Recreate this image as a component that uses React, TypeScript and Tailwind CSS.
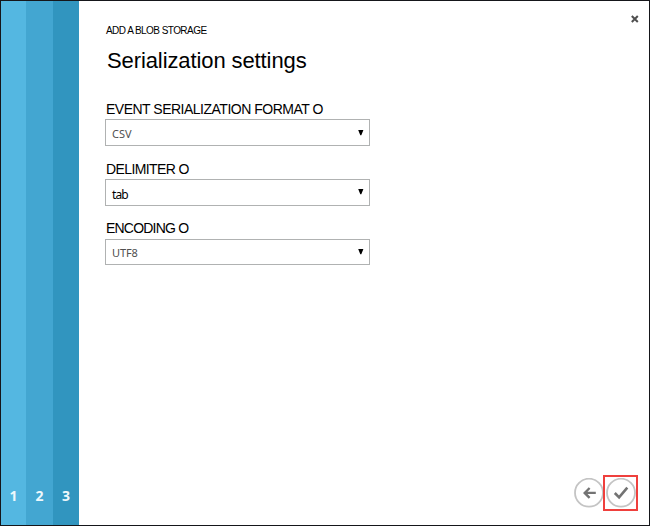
const arial = "font-['Liberation_Sans',Arial,sans-serif]";
const sans = "font-['Noto_Sans','Open_Sans',sans-serif]";

type FieldProps = {
  label: string;
  value: string;
  labelClass: string;
  valueClass: string;
  boxClass: string;
  arrowClass: string;
};

function Field({ label, value, labelClass, valueClass, boxClass, arrowClass }: FieldProps) {
  return (
    <div className="flex flex-col">
      <div className={`ml-px whitespace-nowrap text-[14px] leading-[18px] text-black ${arial} ${labelClass}`}>{label}</div>
      <div className={`flex w-[265px] justify-between border border-[#b0b2b2] bg-white pr-[5px] pl-[6px] ${boxClass}`}>
        <span className={`whitespace-nowrap ${sans} ${valueClass}`}>{value}</span>
        <svg className={`h-[6px] w-[6px] ${arrowClass}`} viewBox="0 0 6 6">
          <path d="M0.2 0H5.4L3.3 5.3H2.3Z" fill="#000" />
        </svg>
      </div>
    </div>
  );
}

function Step({ n, color }: { n: number; color: string }) {
  return (
    <div className={`flex items-end justify-center pb-[18px] text-[14px] leading-[22px] font-bold text-[#eef8fc] ${sans} ${color}`}>{n}</div>
  );
}

export default function App() {
  return (
    <div className="flex h-[526px] w-[650px] overflow-hidden border border-[#15161a] bg-white">
      <aside className="grid w-[78px] shrink-0 grid-cols-[25px_27px_26px]">
        <Step n={1} color="bg-[#54b7e1]" />
        <Step n={2} color="bg-[#43a6d1]" />
        <Step n={3} color="bg-[#3195bf]" />
      </aside>
      <main className="flex grow flex-col pr-[10px] pl-[26px]">
        <header className="flex h-[92px] justify-between">
          <div className="pt-[23px] pl-px">
            <div className={`h-[14px] whitespace-nowrap text-[10px] leading-[14px] tracking-[-0.55px] text-black ${arial}`}>ADD A BLOB STORAGE</div>
            <h1 className={`mt-[9px] ml-px whitespace-nowrap text-[22px] leading-[28px] tracking-[-0.1px] text-black ${arial}`}>Serialization settings</h1>
          </div>
          <button aria-label="Close" className="mt-[14px] h-[8px] w-[8px]">
            <svg className="block h-[8px] w-[8px]" viewBox="0 0 8 8">
              <path d="M0.8 1L6.8 7M6.8 1L0.8 7" stroke="#505050" strokeWidth="2" />
            </svg>
          </button>
        </header>
        <section className="flex grow flex-col pt-[7px]">
          <Field
            label="EVENT SERIALIZATION FORMAT O"
            value="CSV"
            labelClass="h-[19px] tracking-[-0.5px]"
            boxClass="h-[27px]"
            arrowClass="mt-[10px]"
            valueClass="text-[11px] leading-[27px] text-[#505050]"
          />
          <div className="h-[14px]" />
          <Field
            label="DELIMITER O"
            value="tab"
            labelClass="h-[19px] tracking-[-0.6px]"
            boxClass="h-[27px]"
            arrowClass="mt-[9px]"
            valueClass="text-[12px] leading-[29px] tracking-[-0.9px] text-black"
          />
          <div className="h-[13px]" />
          <Field
            label="ENCODING O"
            value="UTF8"
            labelClass="h-[20px] tracking-[-0.8px]"
            boxClass="h-[26px]"
            arrowClass="mt-[9px]"
            valueClass="text-[11px] leading-[25px] tracking-[-0.1px] text-[#505050]"
          />
        </section>
        <footer className="mr-[1px] mb-[14px] flex items-center justify-end">
          <button aria-label="Back" className="-mr-px h-[30px] w-[30px]">
            <svg className="block h-[30px] w-[30px]" viewBox="0 0 30 30" fill="none">
              <circle cx="15" cy="14.7" r="14" stroke="#c4c4c4" strokeWidth="1.8" />
              <path d="M10.8 14.9H21.8M15.6 10L10.7 14.9L15.6 19.8" stroke="#737373" strokeWidth="2.4" />
            </svg>
          </button>
          <button aria-label="Complete" className="flex h-[36px] w-[35px] items-center justify-center border-2 border-[#ef403d]">
            <svg className="block h-[30px] w-[30px] shrink-0" viewBox="0 0 30 30" fill="none">
              <circle cx="15" cy="14.7" r="14" stroke="#c4c4c4" strokeWidth="1.8" />
              <path d="M8.8 15L13.1 19.3L21.3 9.6" stroke="#737373" strokeWidth="2.6" />
            </svg>
          </button>
        </footer>
      </main>
    </div>
  );
}
